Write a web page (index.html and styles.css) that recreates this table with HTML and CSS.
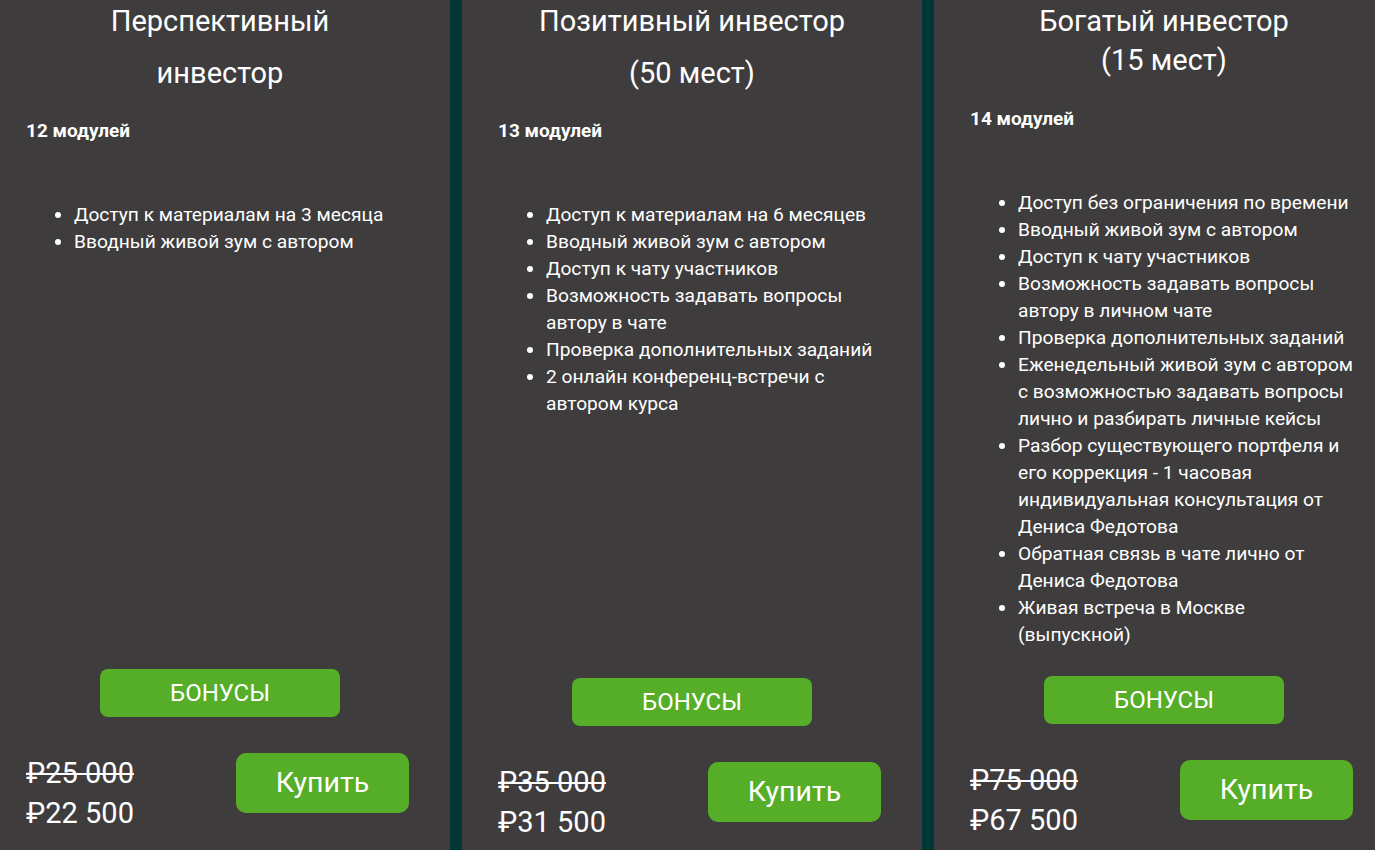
FILE: index.html
```html
<!DOCTYPE html>
<html lang="ru">
<head>
<meta charset="UTF-8">
<meta name="viewport" content="width=device-width, initial-scale=1.0">
<title>Тарифы</title>
<link rel="stylesheet" href="styles.css">
</head>
<body>
<div class="plans">
    <div class="plan plan-one">
        <h2 class="plan-title">Перспективный<br>инвестор</h2>
        <p class="plan-modules">12 модулей</p>
        <ul class="plan-features">
            <li>Доступ к материалам на 3 месяца</li>
            <li>Вводный живой зум с автором</li>
        </ul>
        <div class="plan-bottom">
            <a class="btn btn-bonus" href="#">БОНУСЫ</a>
            <div class="plan-buy">
                <div class="plan-prices">
                    <s>₽25 000</s>
                    <span>₽22 500</span>
                </div>
                <a class="btn btn-buy" href="#">Купить</a>
            </div>
        </div>
    </div>

    <div class="plan plan-two">
        <h2 class="plan-title">Позитивный инвестор<br>(50 мест)</h2>
        <p class="plan-modules">13 модулей</p>
        <ul class="plan-features">
            <li>Доступ к материалам на 6 месяцев</li>
            <li>Вводный живой зум с автором</li>
            <li>Доступ к чату участников</li>
            <li>Возможность задавать вопросы автору в чате</li>
            <li>Проверка дополнительных заданий</li>
            <li>2 онлайн конференц-встречи с автором курса</li>
        </ul>
        <div class="plan-bottom">
            <a class="btn btn-bonus" href="#">БОНУСЫ</a>
            <div class="plan-buy">
                <div class="plan-prices">
                    <s>₽35 000</s>
                    <span>₽31 500</span>
                </div>
                <a class="btn btn-buy" href="#">Купить</a>
            </div>
        </div>
    </div>

    <div class="plan plan-three">
        <h2 class="plan-title">Богатый инвестор<br>(15 мест)</h2>
        <p class="plan-modules">14 модулей</p>
        <ul class="plan-features">
            <li>Доступ без ограничения по времени</li>
            <li>Вводный живой зум с автором</li>
            <li>Доступ к чату участников</li>
            <li>Возможность задавать вопросы автору в личном чате</li>
            <li>Проверка дополнительных заданий</li>
            <li>Еженедельный живой зум с автором с возможностью задавать вопросы лично и разбирать личные кейсы</li>
            <li>Разбор существующего портфеля и его коррекция - 1 часовая индивидуальная консультация от Дениса Федотова</li>
            <li>Обратная связь в чате лично от Дениса Федотова</li>
            <li>Живая встреча в Москве (выпускной)</li>
        </ul>
        <div class="plan-bottom">
            <a class="btn btn-bonus" href="#">БОНУСЫ</a>
            <div class="plan-buy">
                <div class="plan-prices">
                    <s>₽75 000</s>
                    <span>₽67 500</span>
                </div>
                <a class="btn btn-buy" href="#">Купить</a>
            </div>
        </div>
    </div>
</div>
</body>
</html>
```

FILE: styles.css
```css
/* Pricing plans */
body {
    margin: 0;
    padding: 0;
    background-color: #003634;
    font-family: Roboto, "Liberation Sans", Arial, sans-serif;
    color: #fff;
    overflow: hidden;
}
.plans {
    display: grid;
    grid-template-columns: repeat(3, 460px);
    gap: 12px;
    margin-left: -10px;
    height: 850px;
}
.plan {
    display: flex;
    flex-direction: column;
    padding: 0 36px;
    background-color: #3e3c3d;
    overflow: hidden;
}
.plan-title {
    margin: -5px 0 20px;
    font-size: 29px;
    font-weight: 400;
    line-height: 52px;
    text-align: center;
}
.plan-three .plan-title {
    margin: 2px 0 27px;
    line-height: 39px;
}
.plan-modules {
    margin: 0;
    font-size: 19px;
    font-weight: 700;
    line-height: 24px;
}
.plan-features {
    margin: 58px 0 0;
    padding-left: 48px;
    font-size: 19.2px;
    line-height: 27px;
}
.plan-bottom {
    margin-top: auto;
    display: flex;
    flex-direction: column;
    align-items: center;
    padding-bottom: 17px;
}
.plan-two .plan-bottom {
    padding-bottom: 8px;
}
.plan-three .plan-bottom {
    padding-bottom: 10px;
}
.btn {
    display: block;
    background-color: #56ad28;
    color: #fff;
    text-align: center;
    text-decoration: none;
}
.btn-bonus {
    width: 240px;
    height: 48px;
    margin-bottom: 36px;
    border-radius: 8px;
    font-size: 24px;
    line-height: 48px;
}
.plan-buy {
    display: flex;
    align-items: flex-start;
    align-self: stretch;
}
.plan-prices {
    display: flex;
    flex-direction: column;
    width: 210px;
    font-size: 29px;
    line-height: 40px;
}
.plan-prices s {
    text-decoration-thickness: 2px;
}
.btn-buy {
    width: 173px;
    height: 60px;
    border-radius: 10px;
    font-size: 28.5px;
    line-height: 60px;
}
```
